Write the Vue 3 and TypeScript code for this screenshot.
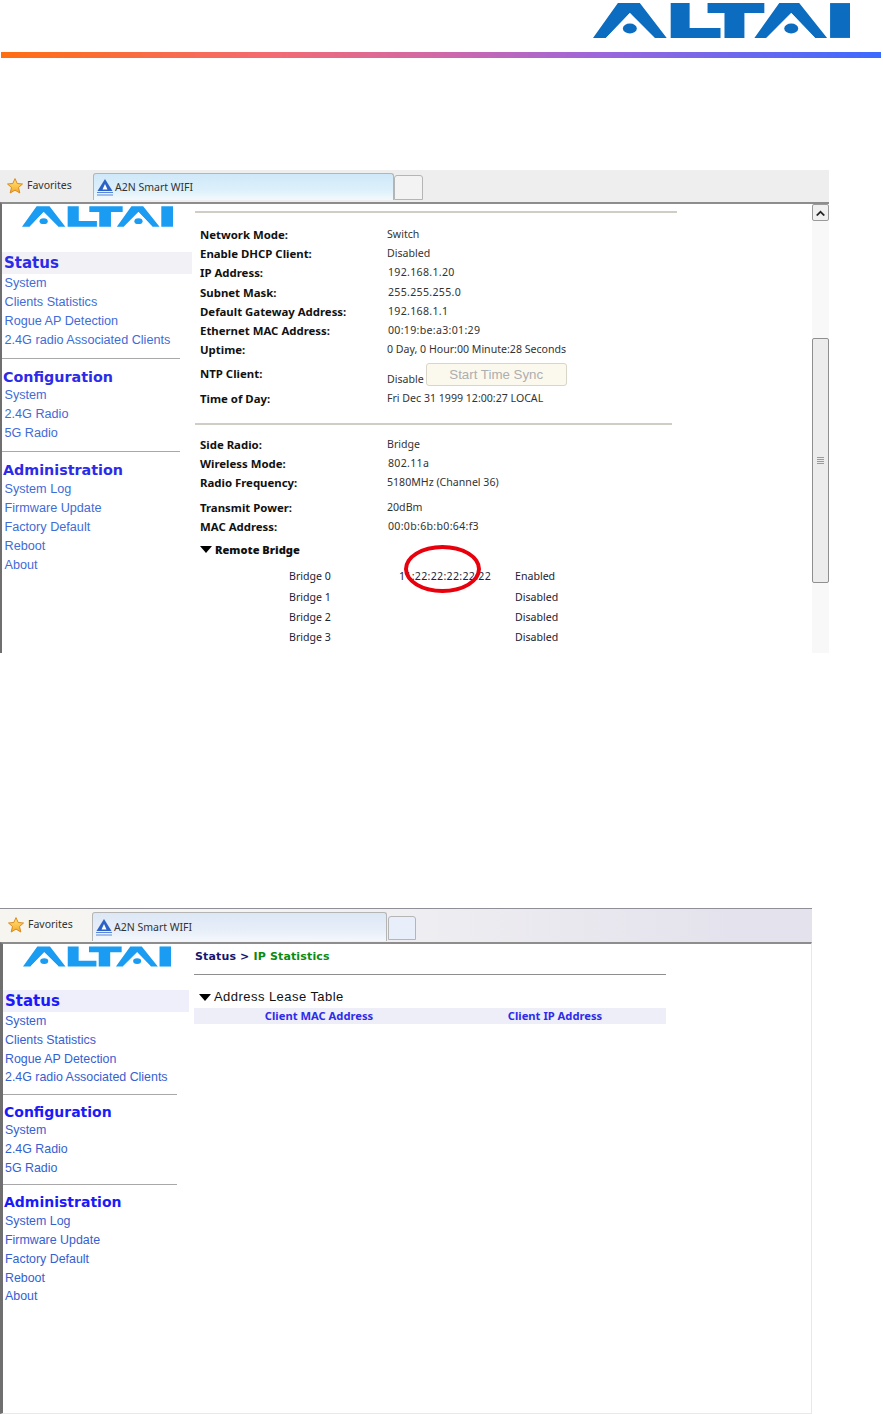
<script setup lang="ts">
interface Row { label: string; value: string; cls?: string }
interface NavSection { title: string; links: string[]; cls: string }

const nav: NavSection[] = [
  { title: 'Status', cls: 'status', links: ['System', 'Clients Statistics', 'Rogue AP Detection', '2.4G radio Associated Clients'] },
  { title: 'Configuration', cls: 'config', links: ['System', '2.4G Radio', '5G Radio'] },
  { title: 'Administration', cls: 'admin', links: ['System Log', 'Firmware Update', 'Factory Default', 'Reboot', 'About'] },
]

const netRows: Row[] = [
  { label: 'Network Mode:', value: 'Switch' },
  { label: 'Enable DHCP Client:', value: 'Disabled' },
  { label: 'IP Address:', value: '192.168.1.20', cls: 'sp' },
  { label: 'Subnet Mask:', value: '255.255.255.0', cls: 'sp' },
  { label: 'Default Gateway Address:', value: '192.168.1.1', cls: 'sp' },
  { label: 'Ethernet MAC Address:', value: '00:19:be:a3:01:29', cls: 'sp' },
  { label: 'Uptime:', value: '0 Day, 0 Hour:00 Minute:28 Seconds' },
]

const radioRows: Row[] = [
  { label: 'Side Radio:', value: 'Bridge' },
  { label: 'Wireless Mode:', value: '802.11a', cls: 'sp' },
  { label: 'Radio Frequency:', value: '5180MHz (Channel 36)', cls: 'gap' },
  { label: 'Transmit Power:', value: '20dBm' },
  { label: 'MAC Address:', value: '00:0b:6b:b0:64:f3', cls: 'sp' },
]

const bridges = [
  { name: 'Bridge 0', mac: '11:22:22:22:22:22', state: 'Enabled' },
  { name: 'Bridge 1', mac: '', state: 'Disabled' },
  { name: 'Bridge 2', mac: '', state: 'Disabled' },
  { name: 'Bridge 3', mac: '', state: 'Disabled' },
]

const screens = ['first', 'second']
</script>

<template>
  <div class="page">
    <svg width="0" height="0" class="defs" aria-hidden="true">
      <defs>
        <linearGradient id="stargrad" x1="0" y1="0" x2="0" y2="1">
          <stop offset="0" stop-color="#ffe680" />
          <stop offset="1" stop-color="#f7a823" />
        </linearGradient>
      </defs>
      <symbol id="altai" viewBox="0 0 258 35">
        <path fill="currentColor" d="M0 35 25 0H47L74 35H62L37 10 13 35Z" />
        <path fill="#fff" d="M37 10 62 35H13Z" />
        <ellipse fill="currentColor" cx="37" cy="25.5" rx="7" ry="5" />
        <path fill="currentColor" d="M78 0H97V25H128V35H78Z" />
        <path fill="currentColor" d="M115 0H172V10H152V35H132V10H115Z" />
        <path fill="currentColor" d="M162 35 187 0H207L235 35H223L199 10 174 35Z" />
        <path fill="#fff" d="M199 10 223 35H174Z" />
        <ellipse fill="currentColor" cx="199" cy="25.5" rx="7" ry="5" />
        <path fill="currentColor" d="M238 0H258V35H238Z" />
      </symbol>
      <symbol id="star" viewBox="0 0 16 16">
        <path fill="url(#stargrad)" stroke="#d98a1c" stroke-width="1" stroke-linejoin="round" d="M8 .6 10.200 5.500 15.500 6 11.500 9.500 12.800 15 8 12.100 3.200 15 4.500 9.500.5 6 5.800 5.500Z" />
      </symbol>
      <symbol id="fav" viewBox="0 0 16 17">
        <path fill="#2c62c8" d="M8 0 15.500 12H.5Z" />
        <path fill="#fff" d="M8 5 10.500 10.500H5.500Z" />
        <path fill="#5a86d8" d="M0 13H16V14H0ZM0 15.500H16V16.500H0Z" />
      </symbol>
    </svg>

    <header class="head">
      <svg class="logo-big"><use href="#altai" /></svg>
    </header>
    <div class="rainbow"></div>

    <section v-for="s in screens" :key="s" class="shot" :class="s">
      <div class="tabbar">
        <div class="fav">
          <svg class="star"><use href="#star" /></svg>
          <span>Favorites</span>
        </div>
        <div class="tab">
          <svg class="tabicon"><use href="#fav" /></svg>
          <span>A2N Smart WIFI</span>
        </div>
        <div class="newtab"></div>
      </div>

      <div class="window">
        <aside class="side">
          <svg class="logo-small"><use href="#altai" /></svg>
          <div v-for="n in nav" :key="n.title" class="navsec" :class="n.cls">
            <h2>{{ n.title }}</h2>
            <a v-for="l in n.links" :key="l">{{ l }}</a>
          </div>
        </aside>

        <main v-if="s === 'first'" class="main">
          <hr class="rule top" />
          <div v-for="r in netRows" :key="r.label" class="row" :class="r.cls">
            <b>{{ r.label }}</b><span>{{ r.value }}</span>
          </div>
          <div class="row ntp">
            <b>NTP Client:</b>
            <span class="ntpval"><i>Disable</i><button disabled>Start Time Sync</button></span>
          </div>
          <div class="row">
            <b>Time of Day:</b><span>Fri Dec 31 1999 12:00:27 LOCAL</span>
          </div>
          <hr class="rule mid" />
          <div v-for="r in radioRows" :key="r.label" class="row" :class="r.cls">
            <b>{{ r.label }}</b><span>{{ r.value }}</span>
          </div>
          <div class="remote"><em class="tri"></em><b>Remote Bridge</b></div>
          <div class="bridges">
            <div v-for="b in bridges" :key="b.name" class="bridge">
              <span>{{ b.name }}</span><span>{{ b.mac }}</span><span>{{ b.state }}</span>
            </div>
            <div class="mark"></div>
          </div>
        </main>

        <main v-else class="main lease">
          <div class="crumb"><span class="c1">Status &gt; </span><span class="c2">IP Statistics</span></div>
          <hr class="rule" />
          <div class="ltitle"><em class="tri"></em><span>Address Lease Table</span></div>
          <div class="thead"><span>Client MAC Address</span><span>Client IP Address</span></div>
        </main>

        <div v-if="s === 'first'" class="scroll">
          <div class="sbtn"><svg width="9" height="6" viewBox="0 0 9 6"><path d="M0 5 4.500 .5 9 5 7.500 6 4.500 3 1.500 6Z" fill="#222" /></svg></div>
          <div class="thumb"><div class="grip"></div></div>
        </div>
      </div>
    </section>
  </div>
</template>

<style scoped>
.page {
  position: relative;
  width: 883px;
  height: 1414px;
  overflow: hidden;
  background: #fff;
  font-family: "Noto Sans", "Liberation Sans", sans-serif;
  color: #1d1d1d;
}
.defs { position: absolute; }
.head { height: 52px; display: flex; justify-content: flex-end; align-items: flex-start; padding: 3px 33px 0 0; box-sizing: border-box; }
.logo-big { width: 257px; height: 35px; color: #0b6cc0; }
.rainbow {
  height: 6px;
  margin: 0 2px 0 1px;
  background: linear-gradient(90deg, #ff6e10 0%, #f46a70 30%, #d068a8 50%, #9c66dc 68%, #3c6aff 100%);
}

.shot { display: flex; flex-direction: column; box-sizing: border-box; }
.first { width: 829px; height: 483px; margin-top: 112px; }
.second { width: 812px; height: 506px; margin-top: 255px; border-top: 1px solid #8f8f98; }

.tabbar { height: 32px; display: flex; align-items: flex-end; flex: none; background: #eeeeee; }
.second .tabbar { height: 33px; background: linear-gradient(90deg, #f6f5f0 0%, #f4f4f4 30%, #e4e2ec 90%); }
.fav { width: 93px; height: 29px; display: flex; align-items: center; padding-left: 7px; box-sizing: border-box; font-size: 10.5px; gap: 4px; color: #333; align-self: flex-start; }
.second .fav { width: 92px; height: 30px; padding-left: 8px; }
.star { width: 16px; height: 16px; flex: none; margin-top: 2px; }
.tab {
  width: 301px;
  height: 27px;
  display: flex;
  align-items: center;
  gap: 2px;
  padding-left: 3px;
  box-sizing: border-box;
  font-size: 10.5px;
  color: #333;
  border: 1px solid #b5b5b5;
  border-bottom: 0;
  border-radius: 3px 3px 0 0;
  background: linear-gradient(180deg, #cfe8f8 0%, #dcf0fb 60%, #f3f9fc 100%);
  margin-bottom: 2px;
}
.tab span { margin-top: -1px; }
.second .tab { width: 295px; height: 29px; margin-bottom: 1px; background: linear-gradient(180deg, #dde8f6 0%, #e6eef8 60%, #f4f8fc 100%); }
.tabicon { width: 16px; height: 17px; flex: none; }
.newtab { width: 29px; height: 25px; margin-bottom: 2px; border: 1px solid #b5b5b5; border-radius: 3px 3px 0 0; box-sizing: border-box; background: #f3f3f3; }
.second .newtab { width: 28px; height: 24px; margin-left: 1px; background: #e8eefa; }

.window {
  flex: 1;
  min-height: 0;
  display: flex;
  box-sizing: border-box;
  border-top: 2px solid #8d8d8d;
  border-left: 2px solid #6f6f6f;
  background: #fff;
  overflow: hidden;
}
.second .window { border-left-width: 3px; border-right: 1px solid #e8e8e8; border-bottom: 1px solid #e8e8e8; }

.side { width: 190px; flex: none; display: flex; flex-direction: column; box-sizing: border-box; }
.second .side { width: 186px; }
.logo-small { width: 151px; height: 21px; margin: 2px 0 25px 20px; color: #1a9cf2; flex: none; }
.second .logo-small { width: 148px; height: 21px; margin: 2px 0 23px 20px; }
.navsec { display: flex; flex-direction: column; padding-bottom: 8px; }
.navsec h2 {
  margin: 0;
  font: bold 14.300px/22px "DejaVu Sans", sans-serif;
  color: #2b2be8;
  padding-left: 1px;
}
.second .navsec h2 { color: #1a1afa; font-size: 14px; }
.navsec a {
  font: 12.650px/19px "Liberation Sans", Arial, sans-serif;
  color: #3f6cd6;
  padding-left: 2.500px;
  white-space: nowrap;
}
.second .navsec a { font-size: 12.400px; line-height: 18.750px; padding-left: 2px; color: #3461d2; }
.status h2 { font-size: 15px; background: #f2f2f6; padding-left: 2px; }
.second .status h2 { background: #efeffb; font-size: 15px; }
.status, .config { border-bottom: 1px solid #a8a8a8; margin-right: 12px; }
.second .status, .second .config { padding-bottom: 7px; margin-right: 12px; }
.status h2 { margin-right: -12px; }
.config h2 { margin-top: 9px; line-height: 18px; }
.admin h2 { margin-top: 8px; line-height: 20px; }
.second .config h2 { margin-top: 8px; line-height: 18px; }
.second .admin h2 { margin-top: 7px; line-height: 20px; }

.main { width: 486px; flex: none; padding-left: 8px; box-sizing: border-box; font-size: 10.6px; position: relative; }
.rule { border: 0; height: 2px; background: #cfcdc4; margin: 0; }
.rule.top { width: 482px; margin: 7px 0 12px -5px; }
.rule.mid { width: 477px; margin: 14px 0 10px -5px; }
.row { display: grid; grid-template-columns: 187px 1fr; line-height: 19.200px; height: 19.200px; }
.row b { font-weight: 700; font-size: 11.400px; color: #111; white-space: nowrap; }
.row span { color: #333; }
.row.sp span { letter-spacing: .3px; padding-left: 1px; }
.row.gap { margin-bottom: 6px; }
.row.ntp { height: 28px; line-height: 24px; margin: 1px 0; align-items: center; }
.ntpval { display: flex; align-items: flex-end; gap: 2px; }
.ntpval i { font-style: normal; line-height: 14px; }
.ntpval button {
  width: 141px;
  height: 23px;
  border: 1px solid #d8d6c8;
  border-radius: 3px;
  background: #fbf9ee;
  font: 13.300px "Liberation Sans", Arial, sans-serif;
  color: #aeaeae;
  padding: 0;
}
.remote { display: flex; align-items: center; gap: 3px; height: 19px; margin-top: 4px; font-size: 11.100px; font-weight: 700; color: #111; }
.tri { width: 0; height: 0; border-left: 6px solid transparent; border-right: 6px solid transparent; border-top: 7px solid #000; display: block; }
.bridges { position: relative; margin-top: 7px; }
.bridge { display: grid; grid-template-columns: 110px 116px 1fr; padding-left: 89px; height: 20.300px; line-height: 20.300px; color: #223; }
.bridge span:nth-child(2) { white-space: nowrap; letter-spacing: .3px; }
.mark {
  position: absolute;
  left: 204px;
  top: -21px;
  width: 69px;
  height: 40px;
  border: 4.500px solid #e8000c;
  border-radius: 50%;
}

.lease { padding-left: 5px; width: 477px; font-size: 11.200px; }
.crumb { font: bold 11px/14px "DejaVu Sans", sans-serif; letter-spacing: .15px; margin-top: 6px; padding-left: 1px; }
.c1 { color: #16166e; }
.c2 { color: #0b8a10; }
.lease .rule { height: 1px; background: #8f8f8f; margin-top: 10px; }
.ltitle { display: flex; align-items: center; gap: 3px; margin: 14px 0 3px 5px; font: 13px/16px "Liberation Sans", Arial, sans-serif; color: #111; letter-spacing: .45px; }
.thead { display: grid; grid-template-columns: 250px 222px; background: #eeeef9; height: 16px; line-height: 16px; font-weight: 700; color: #2c2cea; text-align: center; }

.scroll {
  width: 17px;
  margin-left: auto;
  flex: none;
  display: flex;
  flex-direction: column;
  background: #f8f8f8;
  box-sizing: border-box;
}
.sbtn { height: 17px; border: 1px solid #9a9a9a; border-radius: 2px; background: #f0f0f0; display: flex; align-items: center; justify-content: center; box-sizing: border-box; }
.thumb { height: 245px; margin-top: 117px; border: 1px solid #8f8f8f; border-radius: 2px; background: #ececec; box-sizing: border-box; display: flex; align-items: center; justify-content: center; }
.grip { width: 7px; height: 7px; background: repeating-linear-gradient(180deg, #9a9a9a 0 1px, #ececec 1px 2px); }
</style>
